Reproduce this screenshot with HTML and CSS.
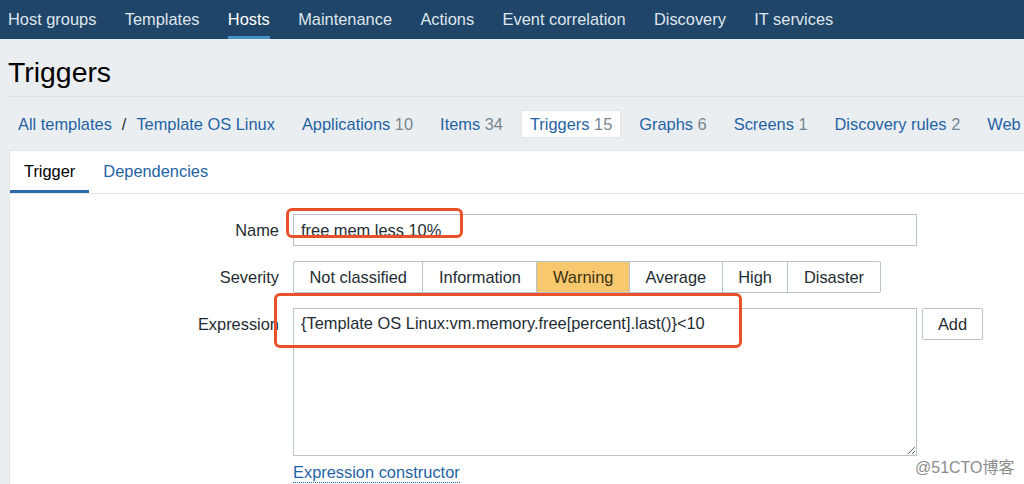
FILE: index.html
```html
<!DOCTYPE html>
<html>
<head>
<meta charset="utf-8">
<title>Triggers</title>
<link rel="stylesheet" href="styles.css">
</head>
<body>
<nav class="topnav">
  <a class="topnav-item">Host groups</a>
  <a class="topnav-item">Templates</a>
  <a class="topnav-item is-active">Hosts</a>
  <a class="topnav-item">Maintenance</a>
  <a class="topnav-item">Actions</a>
  <a class="topnav-item">Event correlation</a>
  <a class="topnav-item">Discovery</a>
  <a class="topnav-item">IT services</a>
</nav>

<header class="page-header">
  <h1 class="page-title">Triggers</h1>
</header>

<ul class="crumbs">
  <li class="crumb"><a class="link">All templates</a><span class="crumb-sep">/</span><a class="link">Template OS Linux</a></li>
  <li class="crumb"><a class="link">Applications</a> <span class="count">10</span></li>
  <li class="crumb"><a class="link">Items</a> <span class="count">34</span></li>
  <li class="crumb is-selected"><a class="link">Triggers</a> <span class="count">15</span></li>
  <li class="crumb"><a class="link">Graphs</a> <span class="count">6</span></li>
  <li class="crumb"><a class="link">Screens</a> <span class="count">1</span></li>
  <li class="crumb"><a class="link">Discovery rules</a> <span class="count">2</span></li>
  <li class="crumb"><a class="link">Web</a></li>
</ul>

<section class="panel">
  <ul class="tabs">
    <li class="tab is-active">Trigger</li>
    <li class="tab"><a class="link">Dependencies</a></li>
  </ul>

  <form class="form">
    <label class="form-label">Name</label>
    <div class="form-field">
      <input class="text-input" type="text" value="free mem less 10%">
    </div>

    <label class="form-label">Severity</label>
    <div class="form-field">
      <div class="severity">
        <span class="sev-btn">Not classified</span>
        <span class="sev-btn">Information</span>
        <span class="sev-btn is-warning">Warning</span>
        <span class="sev-btn">Average</span>
        <span class="sev-btn">High</span>
        <span class="sev-btn">Disaster</span>
      </div>
    </div>

    <label class="form-label">Expression</label>
    <div class="form-field">
      <div class="expr-row">
        <textarea class="text-area">{Template OS Linux:vm.memory.free[percent].last()}&lt;10</textarea>
        <button class="btn" type="button">Add</button>
      </div>
      <a class="link dotted">Expression constructor</a>
    </div>
  </form>
</section>

<div class="mark mark-name"></div>
<div class="mark mark-expr"></div>
<div class="watermark">@51CTO博客</div>
</body>
</html>
```

FILE: styles.css
```css
html, body {
  margin: 0;
  padding: 0;
}
body {
  background: #ebeef0;
  font-family: "Liberation Sans", Arial, "Noto Sans CJK SC", sans-serif;
  font-size: 16.4px;
  color: #1f2c33;
  overflow: hidden;
  width: 1024px;
  height: 484px;
  position: relative;
}
a { text-decoration: none; }

.topnav {
  display: flex;
  gap: 28.4px;
  height: 39px;
  padding-left: 8px;
  background: #1f4568;
  white-space: nowrap;
}
.topnav-item {
  display: block;
  line-height: 39px;
  color: #dfe6ee;
}
.topnav-item.is-active {
  color: #ffffff;
  box-shadow: inset 0 -3px 0 #4a90c8;
}

.page-header {
  margin-left: 8px;
  padding: 16px 0 7px;
  border-bottom: 1px solid #dde2e6;
}
.page-title {
  margin: 0;
  font-size: 28.4px;
  font-weight: normal;
  line-height: 34px;
  color: #000;
}

.crumbs {
  display: flex;
  gap: 9px;
  list-style: none;
  margin: 13px 0 0 9px;
  padding: 0;
  white-space: nowrap;
}
.crumb {
  height: 28px;
  box-sizing: border-box;
  padding: 0 8px;
  border: 1px solid transparent;
  border-radius: 2px;
  line-height: 26px;
  flex: none;
}
.crumb.is-selected {
  background: #fff;
  border-color: #e1e5e8;
}
.link { color: #1f63a5; }
.count { color: #768791; }
.crumb-sep {
  margin: 0 10px;
  color: #1f2c33;
}

.panel {
  margin: 12px -40px 0 9px;
  background: #fff;
  border: 1px solid #dfe4e7;
  height: 400px;
}
.tabs {
  display: flex;
  list-style: none;
  margin: 0;
  padding: 0;
  border-bottom: 1px solid #e3e7ea;
}
.tab {
  height: 42px;
  line-height: 41px;
  padding: 0 14px;
  color: #1f2c33;
}
.tab.is-active {
  box-shadow: inset 0 -3px 0 #2c6aa9;
  color: #000;
}

.form {
  display: grid;
  grid-template-columns: 269px auto;
  column-gap: 14px;
  row-gap: 15px;
  padding-top: 20px;
}
.form-label {
  text-align: right;
  line-height: 32px;
  color: #1f2c33;
}
.form-field {
  display: flex;
  flex-direction: column;
  align-items: flex-start;
}
.text-input {
  width: 624px;
  height: 32px;
  box-sizing: border-box;
  border: 1px solid #b7c3ca;
  padding: 0 7px;
  font: inherit;
  color: #1f2c33;
  outline: none;
}
.severity {
  display: flex;
  height: 32px;
  box-sizing: border-box;
  border: 1px solid #b7c3ca;
  border-radius: 2px;
}
.sev-btn {
  padding: 0 15.5px;
  line-height: 30px;
  color: #1f2c33;
  border-left: 1px solid #b7c3ca;
}
.sev-btn:first-child { border-left: none; }
.sev-btn.is-warning {
  background: #f7c86e;
  color: #3e3214;
}
.expr-row {
  display: flex;
  align-items: flex-start;
  gap: 5px;
}
.text-area {
  width: 624px;
  height: 148px;
  box-sizing: border-box;
  border: 1px solid #b7c3ca;
  padding: 5px 7px;
  font: inherit;
  color: #1f2c33;
  resize: both;
  outline: none;
  margin: 0;
}
.btn {
  width: 61px;
  height: 32px;
  background: #fff;
  border: 1px solid #b7c3ca;
  border-radius: 2px;
  font: inherit;
  color: #1f2c33;
  padding: 0;
}
.dotted {
  display: inline-block;
  margin-top: 6px;
  line-height: 20px;
  border-bottom: 1px dotted #1f63a5;
}

.mark {
  position: absolute;
  box-sizing: border-box;
  border: 3px solid #e8512a;
  border-radius: 6px;
}
.mark-name {
  left: 286px;
  top: 208px;
  width: 177px;
  height: 30px;
}
.mark-expr {
  left: 274px;
  top: 293px;
  width: 468px;
  height: 55px;
}
.watermark {
  position: absolute;
  left: 915px;
  top: 459px;
  font-size: 16px;
  line-height: 18px;
  color: #8c8c8c;
  text-shadow: 0 0 1px #fff;
  font-family: "Liberation Sans", "Noto Sans CJK SC", sans-serif;
  white-space: nowrap;
}
```
